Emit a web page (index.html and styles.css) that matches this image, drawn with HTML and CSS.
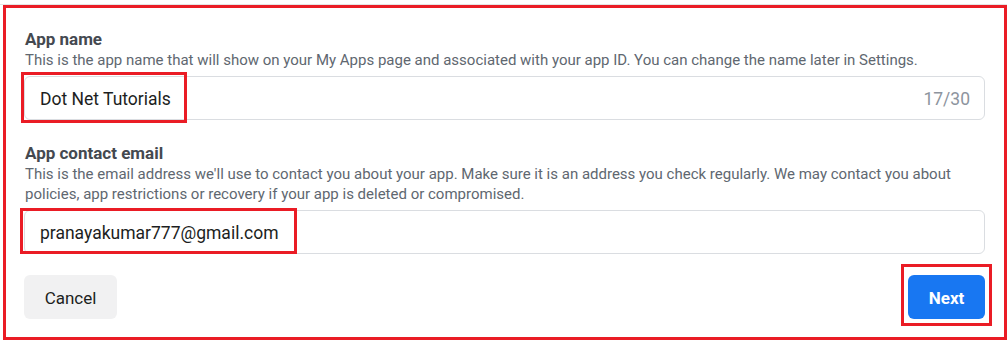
FILE: index.html
```html
<!DOCTYPE html>
<html lang="en">
<head>
<meta charset="utf-8">
<title>Create app</title>
<link rel="stylesheet" href="styles.css">
</head>
<body>
<div class="page">
  <form class="card">
    <div class="field field-name">
      <div class="label">App name</div>
      <div class="desc">This is the app name that will show on your My Apps page and associated with your app ID. You can change the name later in Settings.</div>
      <div class="input-wrap">
        <div class="input"><span class="value">Dot Net Tutorials</span><span class="counter">17/30</span></div>
        <div class="mark mark-name"></div>
      </div>
    </div>
    <div class="field field-email">
      <div class="label">App contact email</div>
      <div class="desc">This is the email address we'll use to contact you about your app. Make sure it is an address you check regularly. We may contact you about policies, app restrictions or recovery if your app is deleted or compromised.</div>
      <div class="input-wrap">
        <div class="input"><span class="value">pranayakumar777@gmail.com</span></div>
        <div class="mark mark-email"></div>
      </div>
    </div>
    <div class="actions">
      <button type="button" class="btn btn-cancel">Cancel</button>
      <div class="next-wrap">
        <button type="button" class="btn btn-next">Next</button>
        <div class="mark mark-next"></div>
      </div>
    </div>
  </form>
</div>
</body>
</html>
```
FILE: styles.css
```css
* { box-sizing: border-box; }
html, body { margin: 0; padding: 0; background: #ffffff; }
body {
  font-family: Roboto, "Liberation Sans", Arial, sans-serif;
  color: #1c1e21;
}
.page {
  width: 1007px;
  height: 341px;
  padding-top: 4px;
}
.page::before {
  content: "";
  display: block;
  height: 1px;
  background: #e4e4e4;
}
.card {
  margin-left: 3px;
  width: 1004px;
  height: 335px;
  border: 3px solid #ea1c25;
  padding: 21px 19px 18px 18px;
  display: flex;
  flex-direction: column;
}
.field-email { margin-top: 23px; }
.label {
  font-size: 17px;
  line-height: 20px;
  font-weight: 700;
  color: #444950;
  padding-left: 1px;
}
.desc {
  margin-top: 1px;
  font-size: 15px;
  line-height: 20px;
  color: #606770;
  padding-left: 1px;
}
.input-wrap {
  position: relative;
  margin-top: 6px;
}
.input {
  height: 44px;
  border: 1px solid #dadde1;
  border-radius: 6px;
  display: flex;
  align-items: center;
  justify-content: space-between;
  padding: 2px 14px 0 15px;
  font-size: 17.5px;
}
.value { color: #1c1e21; }
.counter { color: #8d949e; }
.mark {
  position: absolute;
  border: 3px solid #ea1c25;
  pointer-events: none;
}
.mark-name { left: -3px; top: -4px; width: 166px; height: 51px; }
.mark-email { left: -4px; top: -2px; width: 277px; height: 46px; }
.actions {
  margin-top: 21px;
  display: flex;
  justify-content: space-between;
  align-items: flex-start;
}
.btn {
  height: 44px;
  border: none;
  border-radius: 6px;
  font-family: Roboto, "Liberation Sans", Arial, sans-serif;
  font-size: 17px;
  padding: 2px 20px 0;
  cursor: pointer;
}
.btn-cancel {
  width: 93px;
  background: #f1f1f2;
  color: #1c1e21;
}
.next-wrap { position: relative; }
.btn-next {
  width: 77px;
  background: #1877f2;
  color: #ffffff;
  font-weight: 700;
}
.mark-next { left: -7px; top: -11px; width: 91px; height: 62px; }
```
